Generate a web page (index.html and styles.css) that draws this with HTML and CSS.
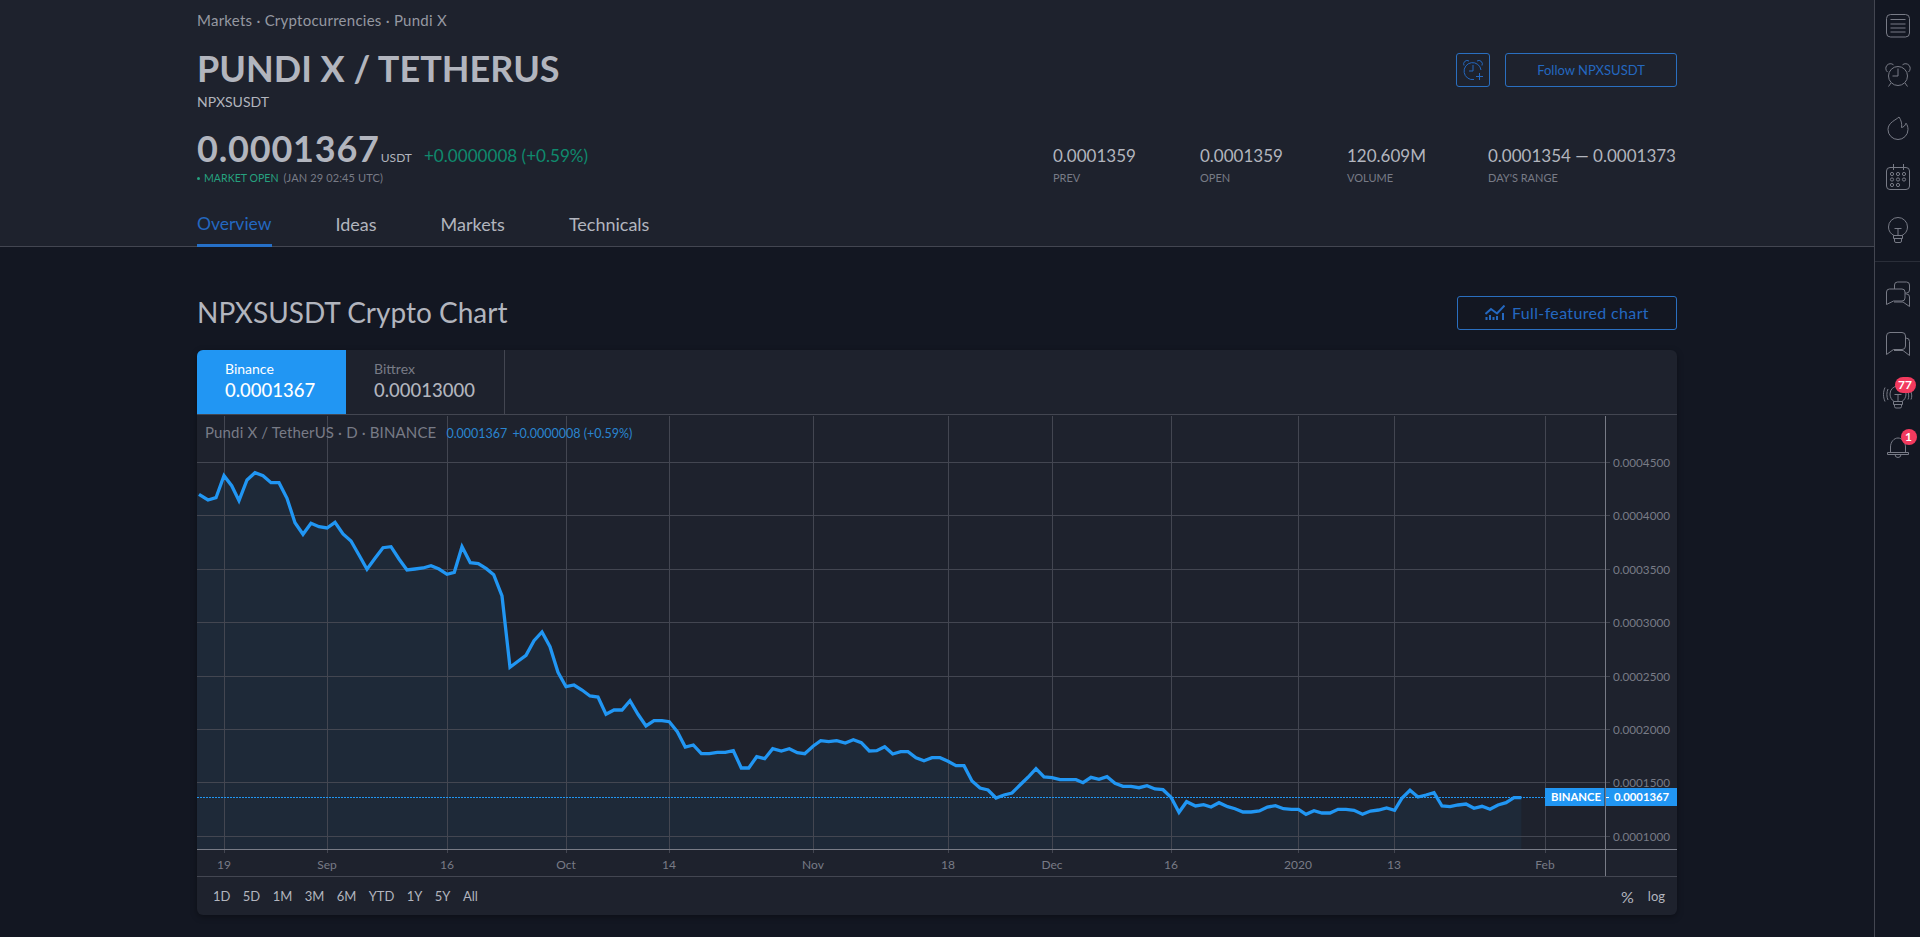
FILE: index.html
```html
<!DOCTYPE html>
<html lang="en">
<head>
<meta charset="utf-8">
<title>NPXSUSDT Crypto Chart</title>
<link rel="stylesheet" href="styles.css">
</head>
<body>
<div class="app">
  <main class="main">
    <header class="head">
      <div class="wrap">
        <nav class="crumbs">Markets · Cryptocurrencies · Pundi X</nav>
        <div class="title-row">
          <div>
            <h1 class="title">PUNDI X / TETHERUS</h1>
            <div class="ticker">NPXSUSDT</div>
          </div>
          <div class="actions">
            <button class="btn btn-icon" aria-label="Add alert">
              <svg class="ico-blue" width="24" height="24" viewBox="0 0 24 24"><path d="M13 21.5A8.5 8.5 0 1 1 20 12M3 7.500a3.500 3.500 0 0 1 5-4.500M21 7.500a3.500 3.500 0 0 0-5-4.500M12 7v6H8M18.500 15v7M15 18.500h7"/></svg>
            </button>
            <button class="btn btn-follow">Follow NPXSUSDT</button>
          </div>
        </div>
        <div class="quote-row">
          <div>
            <div class="price-line"><span class="price">0.0001367</span><span class="cur">USDT</span><span class="chg">+0.0000008 (+0.59%)</span></div>
            <div class="status"><span class="dot"></span><span class="open">MARKET OPEN</span><span class="when">(JAN 29 02:45 UTC)</span></div>
          </div>
          <div class="stats">
            <div class="stat stat-a"><div class="stat-v">0.0001359</div><div class="stat-l">PREV</div></div>
            <div class="stat stat-a"><div class="stat-v">0.0001359</div><div class="stat-l">OPEN</div></div>
            <div class="stat stat-b"><div class="stat-v">120.609M</div><div class="stat-l">VOLUME</div></div>
            <div class="stat stat-c"><div class="stat-v">0.0001354 — 0.0001373</div><div class="stat-l">DAY'S RANGE</div></div>
          </div>
        </div>
        <nav class="tabs">
          <a class="tab tab-on">Overview</a>
          <a class="tab">Ideas</a>
          <a class="tab">Markets</a>
          <a class="tab">Technicals</a>
        </nav>
      </div>
    </header>
    <section class="wrap section">
      <div class="section-head">
        <h2 class="h2">NPXSUSDT Crypto Chart</h2>
        <button class="btn btn-full">
          <svg class="ico-blue ico-thick" width="20" height="16" viewBox="0 0 20 16"><path d="M.5 9L6 4l6 4.500L19.500.500"/><path class="bars" d="M1.500 12v3M5 10v5M8.500 12v3M12 11v4M18 8v7"/></svg>
          <span>Full-featured chart</span>
        </button>
      </div>
      <div class="card">
        <div class="exch">
          <div class="exch-tab exch-on"><div class="exch-n">Binance</div><div class="exch-p">0.0001367</div></div>
          <div class="exch-tab"><div class="exch-n">Bittrex</div><div class="exch-p">0.00013000</div></div>
        </div>
        <div class="chart">
          <svg class="plot" width="1480" height="461" viewBox="197 415 1480 461">
            <polygon class="area" points="197,849 197,493 199,494.300 208,500 216,497.700 224,475.700 231.700,485.700 239,500.700 247,480 255,472.700 263,475.700 271,482.700 279,482.700 287,498.300 295,522.700 303,534.300 311,523.300 319,526.700 327,528 335,522.300 343,534 351,541 359,555 367,569.300 375,558.300 383,547.700 391,546.700 399,559 407,570 415,569 423,568 431,565.700 439,569 447,574.300 454.300,572.300 462,546.700 470.300,562.700 478.300,563.700 486.300,568.700 493.700,574.700 502,596 510,667.300 518,661.300 526,655.300 534,640.700 542,632 550,646.700 558,672.300 566,686.700 574,685 582,690 590,696 598,697 606,714.300 614,710 622,710 630,700.700 638,714.300 646,726 654,720.700 662,720.700 669.300,721.700 677.300,731.700 685.300,747 693.300,745 701.300,753.700 709.300,753.700 717.300,752.300 725.300,752.300 733.300,750.700 741.300,768 748.700,768 756.700,756.700 764.700,758.700 772.700,748.700 781.300,751 789.300,748.700 797.300,752.700 804.700,753.700 813.300,746 820.700,740.700 828.700,741.700 836.700,740.700 845.300,743 853.300,739.700 861.300,742.700 869.300,751 876.700,750.700 884.700,746.700 892.700,754 900.700,751.700 908,751.700 916,757.700 924,760.700 932,757.700 940,757.700 948,761.300 956,765.700 964,765.700 972,781 980,788 988,790 996,798 1004,795 1012,793 1020,785 1028,777.300 1036,768.700 1044,777 1052,777.700 1060,779.700 1068,779.700 1076,779.700 1083,782.700 1091,777.300 1099,779.300 1107,776.700 1115,783.300 1123,786.300 1131,786.300 1139,787.700 1147,785.700 1155,789 1163,789.700 1171,797.300 1179,812.300 1186.600,801.700 1195.500,806 1203.600,804.700 1211,807 1219,802.700 1227.700,806.700 1235,808.700 1243,812 1251,812 1259.400,811 1267.400,807 1275.400,805.700 1283.500,808.700 1291.500,809.300 1298.500,809.300 1306,814.300 1314,810.700 1322,813 1330,813 1338,809.300 1346,809.300 1354,810.300 1362.500,814.300 1370.500,811 1378.600,810 1386.600,808 1394.600,810.300 1401.800,798.300 1410,790.300 1418,797 1426,795 1434,792.700 1442,806 1450,806.700 1458,805 1466,804 1474,808.300 1482,806.300 1490,809.300 1498,805 1506,802.700 1514,797.700 1521.400,797.700 1521.400,849"/>
            <path class="grid" d="M197 462.500H1610M197 515.500H1610M197 569.500H1610M197 622.500H1610M197 676.500H1610M197 729.500H1610M197 782.500H1610M197 836.500H1610"/>
            <path class="grid" d="M224.500 416V853M327.500 416V853M447.500 416V853M566.500 416V853M669.500 416V853M813.500 416V853M948.500 416V853M1052.500 416V853M1171.500 416V853M1298.500 416V853M1394.500 416V853M1545.500 416V853"/>
            <path class="axis" d="M197 849.500H1677M1605.500 416V876"/>
            <polyline class="line" points="199,494.300 208,500 216,497.700 224,475.700 231.700,485.700 239,500.700 247,480 255,472.700 263,475.700 271,482.700 279,482.700 287,498.300 295,522.700 303,534.300 311,523.300 319,526.700 327,528 335,522.300 343,534 351,541 359,555 367,569.300 375,558.300 383,547.700 391,546.700 399,559 407,570 415,569 423,568 431,565.700 439,569 447,574.300 454.300,572.300 462,546.700 470.300,562.700 478.300,563.700 486.300,568.700 493.700,574.700 502,596 510,667.300 518,661.300 526,655.300 534,640.700 542,632 550,646.700 558,672.300 566,686.700 574,685 582,690 590,696 598,697 606,714.300 614,710 622,710 630,700.700 638,714.300 646,726 654,720.700 662,720.700 669.300,721.700 677.300,731.700 685.300,747 693.300,745 701.300,753.700 709.300,753.700 717.300,752.300 725.300,752.300 733.300,750.700 741.300,768 748.700,768 756.700,756.700 764.700,758.700 772.700,748.700 781.300,751 789.300,748.700 797.300,752.700 804.700,753.700 813.300,746 820.700,740.700 828.700,741.700 836.700,740.700 845.300,743 853.300,739.700 861.300,742.700 869.300,751 876.700,750.700 884.700,746.700 892.700,754 900.700,751.700 908,751.700 916,757.700 924,760.700 932,757.700 940,757.700 948,761.300 956,765.700 964,765.700 972,781 980,788 988,790 996,798 1004,795 1012,793 1020,785 1028,777.300 1036,768.700 1044,777 1052,777.700 1060,779.700 1068,779.700 1076,779.700 1083,782.700 1091,777.300 1099,779.300 1107,776.700 1115,783.300 1123,786.300 1131,786.300 1139,787.700 1147,785.700 1155,789 1163,789.700 1171,797.300 1179,812.300 1186.600,801.700 1195.500,806 1203.600,804.700 1211,807 1219,802.700 1227.700,806.700 1235,808.700 1243,812 1251,812 1259.400,811 1267.400,807 1275.400,805.700 1283.500,808.700 1291.500,809.300 1298.500,809.300 1306,814.300 1314,810.700 1322,813 1330,813 1338,809.300 1346,809.300 1354,810.300 1362.500,814.300 1370.500,811 1378.600,810 1386.600,808 1394.600,810.300 1401.800,798.300 1410,790.300 1418,797 1426,795 1434,792.700 1442,806 1450,806.700 1458,805 1466,804 1474,808.300 1482,806.300 1490,809.300 1498,805 1506,802.700 1514,797.700 1521.400,797.700"/>
            <path class="dots" d="M197 797.500H1546"/>
            <g class="ptick">
              <text x="1613" y="466.500">0.0004500</text>
              <text x="1613" y="519.500">0.0004000</text>
              <text x="1613" y="573.500">0.0003500</text>
              <text x="1613" y="626.500">0.0003000</text>
              <text x="1613" y="680.500">0.0002500</text>
              <text x="1613" y="733.500">0.0002000</text>
              <text x="1613" y="786.500">0.0001500</text>
              <text x="1613" y="840.500">0.0001000</text>
            </g>
            <g class="ttick">
              <text x="224" y="869">19</text>
              <text x="327" y="869">Sep</text>
              <text x="447" y="869">16</text>
              <text x="566" y="869">Oct</text>
              <text x="669" y="869">14</text>
              <text x="813" y="869">Nov</text>
              <text x="948" y="869">18</text>
              <text x="1052" y="869">Dec</text>
              <text x="1171" y="869">16</text>
              <text x="1298" y="869">2020</text>
              <text x="1394" y="869">13</text>
              <text x="1545" y="869">Feb</text>
            </g>
            <rect class="tag" x="1545" y="788" width="59.500" height="18"/>
            <rect class="tag" x="1606" y="788" width="71" height="18"/>
            <path class="tagtick" d="M1606 797.500H1609"/>
            <text class="tagtext tagmid" x="1576" y="801">BINANCE</text>
            <text class="tagtext" x="1614" y="801">0.0001367</text>
          </svg>
          <div class="legend"><span class="legend-n">Pundi X / TetherUS · D · BINANCE</span><span class="legend-v">0.0001367</span><span class="legend-v">+0.0000008 (+0.59%)</span></div>
        </div>
        <div class="ranges">
          <div class="range-list"><span>1D</span><span>5D</span><span>1M</span><span>3M</span><span>6M</span><span>YTD</span><span>1Y</span><span>5Y</span><span>All</span></div>
          <div class="range-right"><span class="pct">%</span><span>log</span></div>
        </div>
      </div>
    </section>
  </main>
  <aside class="rail">
    <div class="rail-top">
      <svg class="ri ri-menu" width="24" height="24" viewBox="0 0 24 24"><rect x=".5" y=".5" width="23" height="22.500" rx="4"/><path d="M4.500 5.500h15M4.500 10h15M4.500 14h15M4.500 18h15"/></svg>
      <svg class="ri ri-alarm" width="24" height="24" viewBox="0 0 24 24"><circle cx="12" cy="13" r="9.500"/><path d="M12 5.500V13H6.500M1.500 9A4.300 4.300 0 0 1 7.500 1.800M22.500 9A4.300 4.300 0 0 0 16.500 1.800M5 20l-2.500 3.500M19 20l2.500 3.500"/></svg>
      <svg class="ri ri-flame" width="22" height="24" viewBox="0 0 22 24"><path d="M12 1C9 4 1 6.500 1 13.500a10 10 0 0 0 20 0c0-2.500-.7-4.500-2-6.300-.8 2.500-2.500 4-4.500 4.300C15.200 8 14.200 4 12 1Z"/></svg>
      <svg class="ri ri-cal" width="24" height="26" viewBox="0 0 24 26"><rect x=".5" y="3.500" width="23" height="22" rx="3.500"/><path d="M7.500 0v6M17.500 0v6"/><circle cx="6" cy="10" r="1.600"/><circle cx="12" cy="10" r="1.600"/><circle cx="18" cy="10" r="1.600"/><circle cx="6" cy="15.500" r="1.600"/><circle cx="12" cy="15.500" r="1.600"/><circle cx="18" cy="15.500" r="1.600"/><circle cx="6" cy="21" r="1.600"/><circle cx="12" cy="21" r="1.600"/></svg>
      <svg class="ri ri-bulb" width="20" height="26" viewBox="0 0 20 26"><path d="M6 18.500C2.800 17 .5 14 .5 10a9.500 9.500 0 0 1 19 0c0 4-2.300 7-5.500 8.500M6.500 11.500h7M10 11.500v7M5.500 18.500h9v3h-9zM6.500 21.500v2.500a1.500 1.500 0 0 0 1.500 1.500h4a1.500 1.500 0 0 0 1.500-1.500v-2.500"/></svg>
    </div>
    <div class="rail-bottom">
      <svg class="ri ri-chat1" width="24" height="26" viewBox="0 0 24 26"><path d="M3.500 8H16a3 3 0 0 1 3 3v6a3 3 0 0 1-3 3H7.500L.5 23.500V11a3 3 0 0 1 3-3Z"/><path d="M8.500 8V4a3 3 0 0 1 3-3h9a3 3 0 0 1 3 3v5a3 3 0 0 1-3 3H19M19.500 13h1a3 3 0 0 1 3 3v9.500L17 21H8"/></svg>
      <svg class="ri ri-chat2" width="24" height="24" viewBox="0 0 24 24"><path d="M4 .5h12a3.500 3.500 0 0 1 3.500 3.500v10a3.500 3.500 0 0 1-3.500 3.500H7.500L.5 22.500V4A3.500 3.500 0 0 1 4 .5Z"/><path d="M19.500 6h.5a3.500 3.500 0 0 1 3.500 3.500v14L17 18.500H8"/></svg>
      <div class="ri-wrap ri-ideas">
        <svg class="ri" width="30" height="26" viewBox="0 0 30 26"><path d="M11 18.500C8.500 17 7 14 7 11a8 8 0 0 1 16 0c0 3-1.500 6-4 7.500M11.500 11.500h7M15 11.500v7M10.500 18.500h9v3h-9zM11.500 21.500v2a1.500 1.500 0 0 0 1.500 1.500h4a1.500 1.500 0 0 0 1.500-1.500v-2M5 6C3.500 9 3.500 14 5 17M2 4.500C0 9 0 14 2 18.500M25 9c1 3 1 5 0 7.500M28 9c1 3 1 5 0 7.500"/></svg>
        <span class="badge badge-w">77</span>
      </div>
      <div class="ri-wrap ri-bell">
        <svg class="ri" width="22" height="23" viewBox="0 0 22 23"><path d="M3.500 17V12C3.500 7 7 3 11 3s7.500 4 7.500 9v5M.5 17.500h21v2H.5zM8 19.500a3 3 0 0 0 6 0"/></svg>
        <span class="badge">1</span>
      </div>
    </div>
  </aside>
</div>
</body>
</html>
```
FILE: styles.css
```css
* { box-sizing: border-box; }
html, body { margin: 0; padding: 0; height: 937px; overflow: hidden; background: #131722; }
body { font-family: "Lato", "Liberation Sans", sans-serif; color: #b2b5be; font-size: 14px; }
h1, h2 { margin: 0; }
button { font-family: inherit; cursor: pointer; background: transparent; padding: 0; }

.app { display: flex; width: 1920px; height: 937px; }
.main { width: 1874px; flex: none; }
.wrap { width: 1480px; margin: 0 auto; }

.head { height: 247px; background: #1e222d; border-bottom: 1px solid #434651; }
.crumbs { padding-top: 10px; line-height: 20px; font-size: 15px; letter-spacing: .25px; color: #9598a1; height: 46px; }
.title-row { display: flex; justify-content: space-between; height: 83px; }
.title { font-size: 36px; line-height: 44px; font-weight: 700; color: #b2b5be; }
.ticker { margin-top: 2px; font-size: 14px; line-height: 20px; color: #b2b5be; }
.actions { display: flex; gap: 15px; padding-top: 7px; height: 41px; }

.btn { border: 1px solid #2a6fc0; border-radius: 3px; color: #2468c0; display: flex; align-items: center; justify-content: center; padding-bottom: 1px; }
.btn-icon { width: 34px; height: 34px; }
.btn-follow { width: 172px; height: 34px; font-size: 13px; }
.btn-full { width: 220px; height: 34px; font-size: 16px; letter-spacing: .35px; gap: 7px; }
.ico-blue { fill: none; stroke: #2468c0; stroke-width: 1; }
.ico-thick { stroke-width: 2; }
.ico-thick .bars { stroke-width: 2; }

.quote-row { display: flex; justify-content: space-between; height: 57px; }
.price-line { display: flex; align-items: baseline; height: 40px; line-height: 38px; }
.price { font-size: 36px; font-weight: 700; letter-spacing: .8px; color: #b2b5be; }
.cur { font-size: 12px; margin-left: 1px; color: #b2b5be; }
.chg { font-size: 17.1px; margin-left: 12px; color: #0f8a6d; }
.status { margin-top: 1px; display: flex; align-items: center; font-size: 11px; line-height: 16px; }
.dot { width: 3px; height: 3px; border-radius: 50%; background: #26a17f; margin-right: 4px; }
.open { color: #26a17f; margin-right: 5px; font-size: 10.6px; }
.when { color: #787b86; letter-spacing: .12px; }

.stats { display: flex; }
.stat { padding-top: 15px; }
.stat-a { width: 147px; }
.stat-b { width: 141px; }
.stat-c { width: 189px; white-space: nowrap; }
.stat-v { font-size: 17px; line-height: 24px; color: #b2b5be; }
.stat-l { font-size: 11px; line-height: 16px; margin-top: 2px; color: #787b86; }

.tabs { display: flex; gap: 64px; height: 60px; padding-top: 26px; }
.tab { font-size: 18px; line-height: 24px; height: 35px; color: #b2b5be; }
.tab-on { font-size: 17.5px; color: #2468c0; border-bottom: 3px solid #2670c8; }

.section-head { display: flex; justify-content: space-between; align-items: center; margin-top: 49px; height: 34px; }
.h2 { font-size: 28px; font-weight: 400; color: #b2b5be; padding-bottom: 2px; }

.card { margin-top: 20px; height: 565px; background: #1e222d; border-radius: 6px; box-shadow: 0 2px 6px rgba(0,0,0,.35); overflow: hidden; }
.exch { display: flex; height: 65px; border-bottom: 1px solid #434651; }
.exch-tab { width: 159px; padding: 9px 0 0 28px; border-right: 1px solid #434651; color: #b2b5be; }
.exch-on { width: 149px; background: #2196f3; color: #fff; border-right: 0; }
.exch-n { font-size: 14px; line-height: 20px; color: #787b86; }
.exch-on .exch-n { color: #fff; }
.exch-p { font-size: 18.5px; line-height: 24px; margin-top: -1px; font-weight: 500; }

.chart { position: relative; height: 461px; }
.plot { display: block; }
.area { fill: rgba(33,150,243,.06); stroke: none; }
.grid { fill: none; stroke: #434651; stroke-width: 1; }
.axis { fill: none; stroke: #787b86; stroke-width: 1; }
.line { fill: none; stroke: #2196f3; stroke-width: 3.3; stroke-linejoin: miter; }
.dots { fill: none; stroke: #2196f3; stroke-width: 1; stroke-dasharray: 2 1; }
.ptick text { fill: #787b86; font-size: 11.7px; }
.ttick text { fill: #787b86; font-size: 12px; text-anchor: middle; }
.tag { fill: #2196f3; }
.tagtick { stroke: #fff; stroke-width: 1; }
.tagtext { fill: #fff; font-size: 11.3px; font-weight: 700; }
.tagmid { text-anchor: middle; }

.legend { position: absolute; left: 8px; top: 6px; display: flex; align-items: baseline; line-height: 22px; }
.legend-n { font-size: 15px; letter-spacing: .15px; color: #787b86; margin-right: 10px; }
.legend-v { font-size: 12.5px; color: #2a85d0; margin-right: 5px; }

.ranges { display: flex; justify-content: space-between; align-items: center; height: 39px; border-top: 1px solid #434651; padding: 0 12px 0 16px; font-size: 13px; color: #b2b5be; }
.range-list { display: flex; gap: 12.4px; }
.range-right { display: flex; gap: 14px; align-items: center; }
.pct { font-size: 16px; }

.rail { width: 46px; flex: none; border-left: 1px solid #434651; background: #131722; }
.rail-top { height: 262px; border-bottom: 1px solid #2a2e39; display: flex; flex-direction: column; align-items: center; }
.rail-bottom { display: flex; flex-direction: column; align-items: center; }
.ri { display: block; fill: none; stroke: #787b86; stroke-width: 1; overflow: visible; }
.ri-menu { margin-top: 14px; }
.ri-alarm { margin-top: 25px; }
.ri-flame { margin-top: 29px; }
.ri-cal { margin-top: 24px; }
.ri-bulb { margin-top: 27px; }
.ri-chat1 { margin-top: 19px; }
.ri-chat2 { margin-top: 25px; }
.ri-wrap { position: relative; }
.ri-ideas { margin-top: 27px; }
.ri-bell { margin-top: 26px; }
.badge { position: absolute; top: -6px; right: -8px; min-width: 16px; height: 16px; line-height: 16px; border-radius: 8px; background: #f23a5e; color: #fff; font-size: 12px; font-weight: 700; text-align: center; }
.badge-w { min-width: 21px; top: -6px; right: -3px; }
```
